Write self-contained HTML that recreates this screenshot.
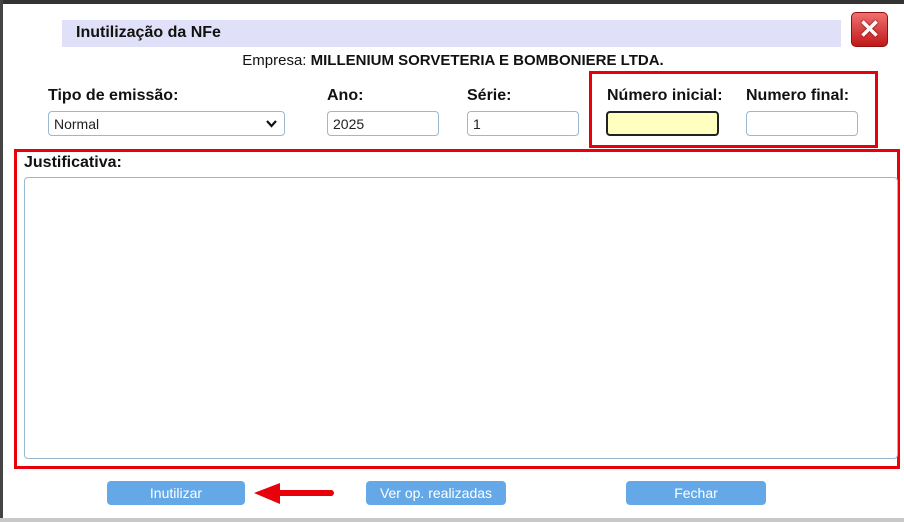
<!DOCTYPE html>
<html><head><meta charset="utf-8"><style>
*{margin:0;padding:0;box-sizing:border-box}
body{width:904px;height:522px;background:#fff;position:relative;overflow:hidden;font-family:"Liberation Sans",sans-serif;color:#111}
.a{position:absolute}
.lbl{font-size:16px;font-weight:bold;position:absolute}
.inp{position:absolute;height:25px;border:1px solid #9ab8d0;border-radius:4px;background:#fff;font-size:14px;padding:4px 5px;color:#222}
.btn{position:absolute;top:481px;height:24px;background:#64a8e8;border-radius:4px;color:#fff;font-size:14px;text-align:center;line-height:24px}
</style></head><body>
<div class="a" style="left:0;top:0;width:904px;height:4px;background:#333"></div>
<div class="a" style="left:0;top:0;width:3px;height:522px;background:#444"></div>
<div class="a" style="left:0;top:518px;width:904px;height:4px;background:#c8c8c8"></div>
<div class="a" style="left:62px;top:20px;width:779px;height:27px;background:#e0e0f8;font-size:16px;font-weight:bold;padding:4px 14px;color:#111">Inutilização da NFe</div>
<div class="a" style="left:851px;top:12px;width:37px;height:35px;border-radius:5px;background:linear-gradient(#f07070,#c01818);border:1px solid #901010;color:#fff;font-size:26px;font-weight:bold;text-align:center;line-height:33px;text-shadow:0 0 2px #600">✕</div>
<div class="a" style="left:0;width:904px;top:52px;text-align:center;font-size:15px;padding-left:2px">Empresa: <b>MILLENIUM SORVETERIA E BOMBONIERE LTDA.</b></div>
<div class="lbl" style="left:48px;top:87px">Tipo de emissão:</div>
<div class="lbl" style="left:327px;top:87px">Ano:</div>
<div class="lbl" style="left:467px;top:87px">Série:</div>
<div class="lbl" style="left:607px;top:87px">Número inicial:</div>
<div class="lbl" style="left:746px;top:87px">Numero final:</div>
<div class="inp" style="left:48px;top:111px;width:237px">Normal<svg style="position:absolute;right:7px;top:8px" width="11" height="8"><path d="M1 1 L5.5 6 L10 1" stroke="#111" stroke-width="2.2" fill="none"/></svg></div>
<div class="inp" style="left:327px;top:111px;width:112px">2025</div>
<div class="inp" style="left:467px;top:111px;width:112px">1</div>
<div class="inp" style="left:606px;top:111px;width:113px;background:#ffffc0;border:2px solid #222"></div>
<div class="inp" style="left:746px;top:111px;width:112px"></div>
<div class="a" style="left:589px;top:71px;width:289px;height:77px;border:3px solid #e8000a"></div>
<div class="a" style="left:14px;top:149px;width:886px;height:320px;border:3px solid #e8000a"></div>
<div class="lbl" style="left:24px;top:154px">Justificativa:</div>
<div class="a" style="left:24px;top:177px;width:874px;height:282px;border:1px solid #9ab8d0;border-radius:4px"></div>
<div class="btn" style="left:107px;width:138px">Inutilizar</div>
<div class="btn" style="left:366px;width:140px">Ver op. realizadas</div>
<div class="btn" style="left:626px;width:140px">Fechar</div>
<svg class="a" style="left:250px;top:480px" width="90" height="28"><path d="M4 13 L30 3 L30 10 L82 10 Q86 13 82 16 L30 16 L30 24 Z" fill="#e8000a"/></svg>
</body></html>
